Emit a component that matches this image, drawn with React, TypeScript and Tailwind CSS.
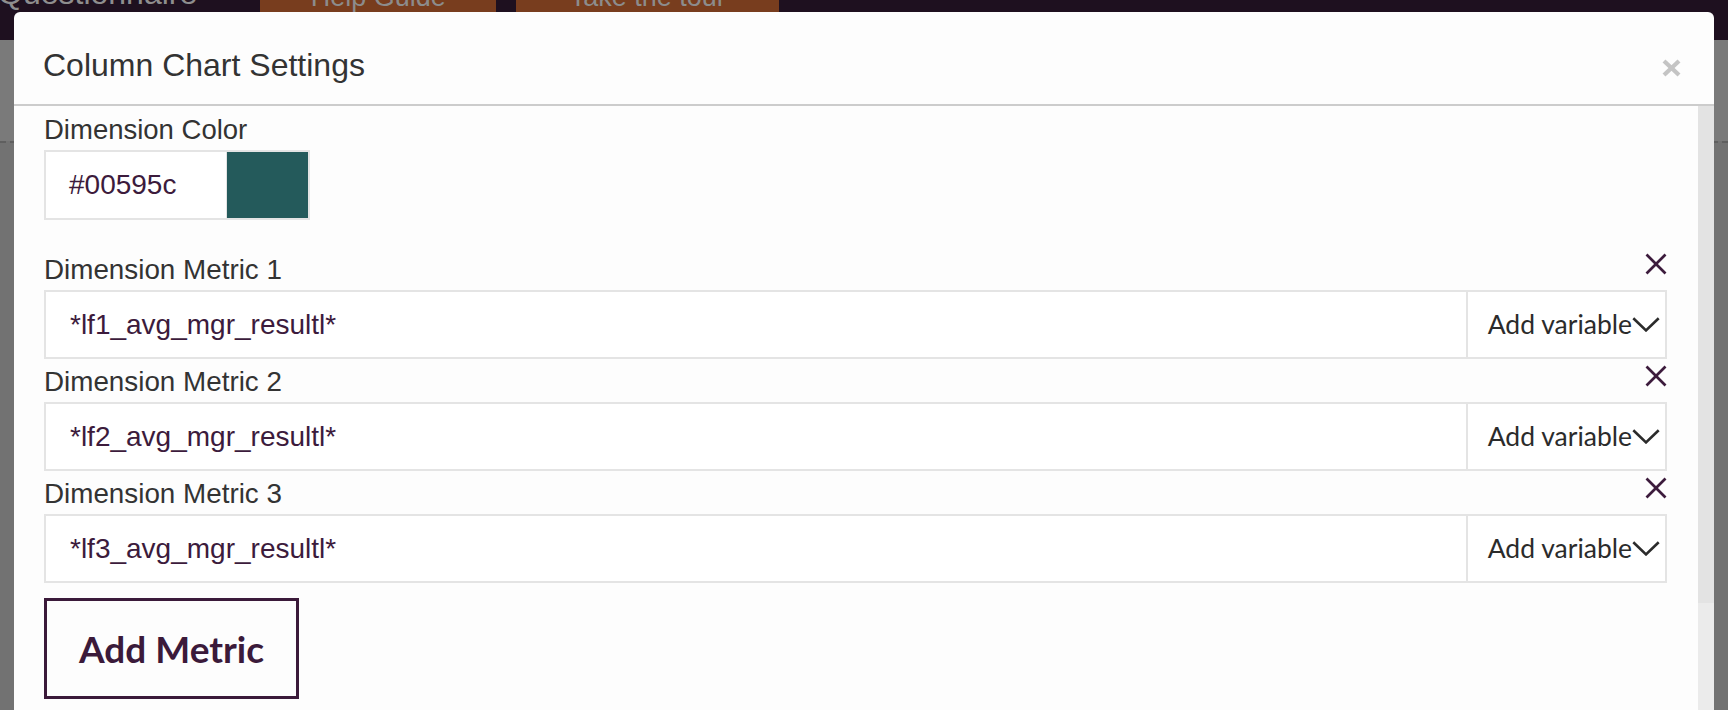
import React from "react";

const PURPLE = "#3c1b3c";

function RemoveIcon() {
  return (
    <svg width="22" height="22" viewBox="0 0 22 22" className="shrink-0">
      <line x1="1.5" y1="1.5" x2="20.5" y2="20.5" stroke={PURPLE} strokeWidth="2.7" />
      <line x1="20.5" y1="1.5" x2="1.5" y2="20.5" stroke={PURPLE} strokeWidth="2.7" />
    </svg>
  );
}

function Chevron() {
  return (
    <svg width="28" height="15" viewBox="0 0 28 15" className="shrink-0">
      <polyline points="1.3,1.3 14,13.4 26.7,1.3" fill="none" stroke="#2b2b2b" strokeWidth="2.6" />
    </svg>
  );
}

function MetricRow({ index, value, first }: { index: number; value: string; first?: boolean }) {
  return (
    <div className={first ? "mt-[33px]" : "mt-[6px]"}>
      <div className="flex items-start justify-between">
        <div className="text-[27.8px] leading-[33px] text-[#333333]">Dimension Metric {index}</div>
        <RemoveIcon />
      </div>
      <div className="mt-[4px] flex h-[69px] border-2 border-[#e4e4e4]">
        <div className="flex flex-1 items-center bg-white pl-[24px] text-[28px] text-[#3c1b3c]">{value}</div>
        <div className="flex w-[199px] items-center justify-end border-l-2 border-[#e4e4e4] bg-white pr-[5px] font-['Lato',sans-serif] text-[26.5px] text-[#2b2b2b]">
          <span>Add variable</span>
          <Chevron />
        </div>
      </div>
    </div>
  );
}

export default function App() {
  return (
    <div className="relative h-[710px] w-[1728px] overflow-hidden bg-[#727272] font-['Liberation_Sans',Arial,sans-serif]">
      {/* underlying page, dimmed behind the modal */}
      <div className="flex h-[40px] items-start overflow-hidden bg-[#1e101f]">
        <div className="ml-[-2px] mt-[-23px] text-[32px] leading-[32px] text-[#8e8e8e]">Questionnaire</div>
        <div className="ml-[63px] flex h-[40px] w-[236px] justify-center bg-[#783d1e]">
          <span className="mt-[-16px] text-[27px] leading-[27px] text-[#8c8c8c]">Help Guide</span>
        </div>
        <div className="ml-[20px] flex h-[40px] w-[263px] justify-center bg-[#783d1e]">
          <span className="mt-[-16px] text-[27px] leading-[27px] text-[#8c8c8c]">Take the tour</span>
        </div>
      </div>
      <div className="h-[101px] bg-[#7a7a7a]" />
      <div className="border-t-2 border-dashed border-[#5f5f5f]" />

      {/* modal */}
      <div className="absolute left-[14px] top-[12px] flex h-[720px] w-[1700px] flex-col rounded-t-[6px] bg-[#fdfdfd]">
        <div className="flex items-start justify-between border-b-2 border-[#cccccc] pb-[22px] pl-[29px] pr-[33px] pt-[37px]">
          <h2 className="text-[32px] leading-[33px] text-[#333333]">Column Chart Settings</h2>
          <svg width="19" height="18" viewBox="0 0 19 18" className="mt-[10px]">
            <line x1="2" y1="2" x2="17" y2="16" stroke="#c4c4c4" strokeWidth="4.2" />
            <line x1="17" y1="2" x2="2" y2="16" stroke="#c4c4c4" strokeWidth="4.2" />
          </svg>
        </div>
        <div className="flex flex-1">
          <div className="flex-1 pl-[30px] pr-[31px] pt-[7px]">
            <div className="text-[27.5px] leading-[33px] text-[#333333]">Dimension Color</div>
            <div className="mt-[4px] flex h-[70px] w-[266px] border-2 border-[#e4e4e4]">
              <div className="flex w-[181px] items-center border-r border-[#e4e4e4] bg-white pl-[23px] text-[28px] text-[#3c1b3c]">
                #00595c
              </div>
              <div className="flex-1 bg-[#245a5b]" />
            </div>

            <MetricRow index={1} value="*lf1_avg_mgr_resultl*" first />
            <MetricRow index={2} value="*lf2_avg_mgr_resultl*" />
            <MetricRow index={3} value="*lf3_avg_mgr_resultl*" />

            <button className="mt-[15px] flex h-[101px] w-[255px] items-center justify-center border-[3px] border-[#3b1a3a] bg-transparent font-['Lato',sans-serif] text-[37px] font-bold text-[#3b1a3a]">
              Add Metric
            </button>
          </div>
          <div className="flex w-[16px] flex-col bg-[#ebebeb]">
            <div className="h-[497px] bg-[#e3e3e3]" />
          </div>
        </div>
      </div>
    </div>
  );
}
